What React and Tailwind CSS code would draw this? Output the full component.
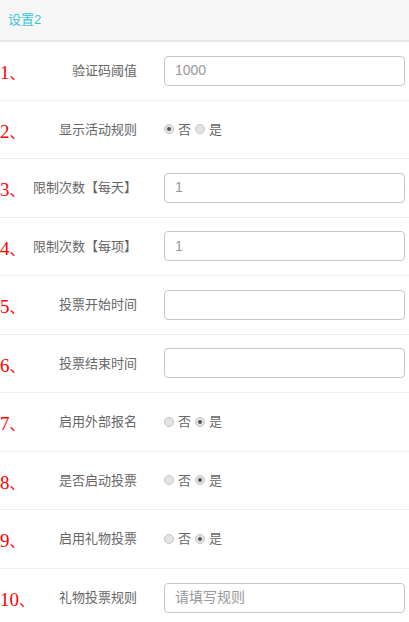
import React from 'react';

const font = { fontFamily: '"Liberation Sans", "Noto Sans CJK SC", sans-serif' };

const Radio = ({ checked, className = '' }) => (
    <span className={`flex h-[10px] w-[10px] shrink-0 items-center justify-center rounded-full border border-[#c4c4c4] bg-[#e4e4e4] ${className}`}>
        {checked && <span className="h-[4px] w-[4px] rounded-full bg-[#555]" />}
    </span>
);

const rows = [
    { label: '验证码阈值', type: 'input', value: '1000' },
    { label: '显示活动规则', type: 'radio', yes: false },
    { label: '限制次数【每天】', type: 'input', value: '1' },
    { label: '限制次数【每项】', type: 'input', value: '1' },
    { label: '投票开始时间', type: 'input', value: '' },
    { label: '投票结束时间', type: 'input', value: '' },
    { label: '启用外部报名', type: 'radio', yes: true },
    { label: '是否启动投票', type: 'radio', yes: true },
    { label: '启用礼物投票', type: 'radio', yes: true },
    { label: '礼物投票规则', type: 'input', value: '', placeholder: '请填写规则' },
];

export default function App() {
    return (
        <div className="min-h-[622px] w-[409px] overflow-hidden bg-white" style={font}>
            {/* header */}
            <div className="flex h-[40px] items-center bg-[#f6f6f6] px-[8px] text-[13px] text-[#3fc6d6]">设置2</div>
            <div className="h-[2px] bg-[#e6e6e6]" />

            {rows.map((r, i) => (
                <div key={i} className={`flex h-[58.5px] items-center ${i < rows.length - 1 ? 'border-b border-[#efefef]' : ''}`}>
                    <span
                        className="mt-[4px] w-[30px] shrink-0 whitespace-nowrap text-[19px] leading-none text-[#ff0000]"
                        style={{ fontFamily: '"Liberation Serif", "Noto Sans CJK SC", serif' }}
                    >
                        {i + 1}<span className="text-[15px]">、</span>
                    </span>
                    <div className="w-[107px] shrink-0 whitespace-nowrap text-right text-[13px] text-[#666]">{r.label}</div>
                    <div className="ml-[27px]">
                        {r.type === 'input' ? (
                            <div className="flex h-[30px] w-[241px] items-center rounded-[4px] border border-[#c8c8c8] px-[10px] text-[14px] text-[#999]">
                                {r.value || r.placeholder || ''}
                            </div>
                        ) : (
                            <div className="flex items-center text-[13px] text-[#666]">
                                <Radio checked={!r.yes} />
                                <span className="ml-[4px]">否</span>
                                <Radio checked={r.yes} className="ml-[4px]" />
                                <span className="ml-[4px]">是</span>
                            </div>
                        )}
                    </div>
                </div>
            ))}
        </div>
    );
}
